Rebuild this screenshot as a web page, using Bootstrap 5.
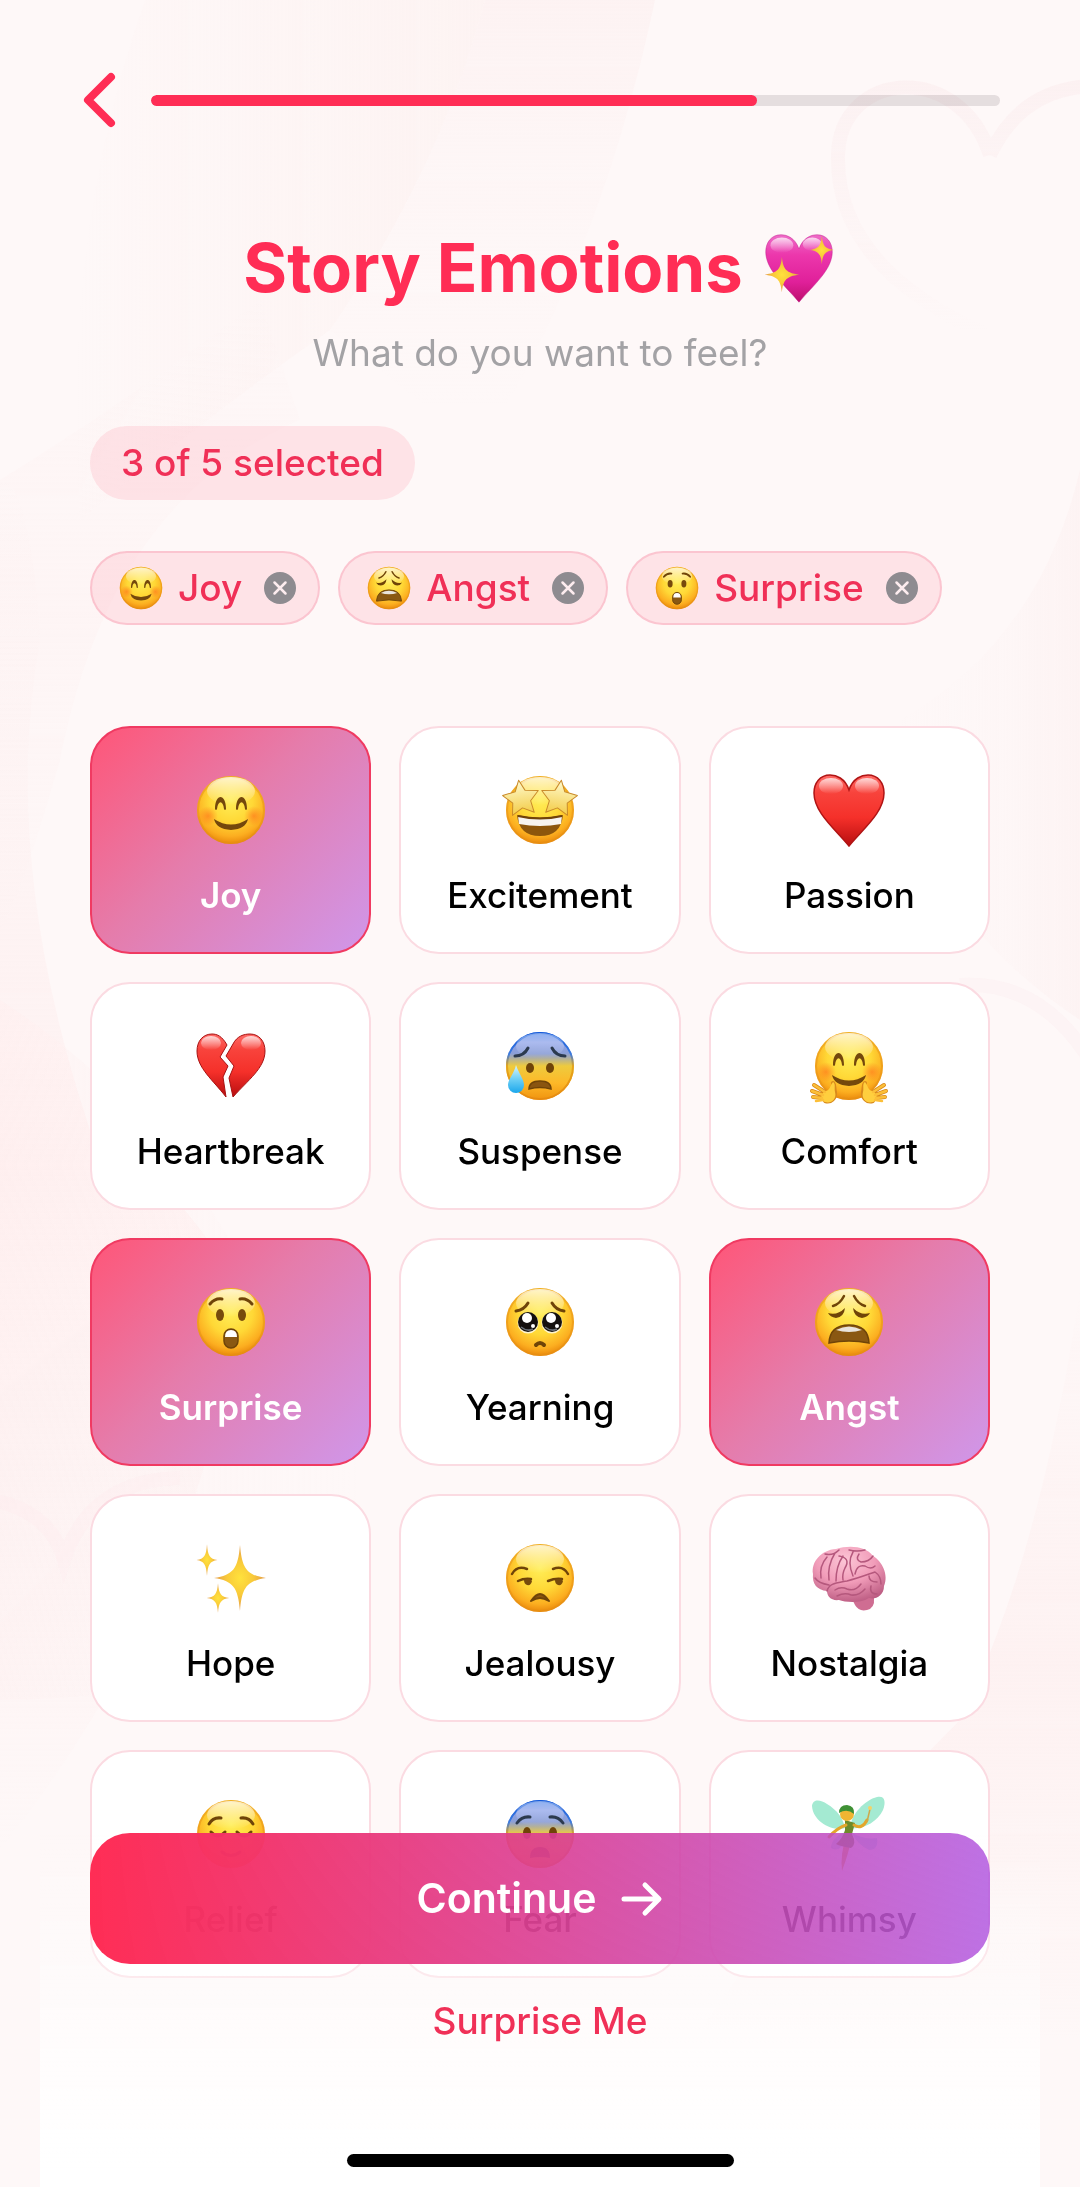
<!DOCTYPE html>
<html lang="en">
<head>
<meta charset="utf-8">
<meta name="viewport" content="width=device-width, initial-scale=1">
<title>Story Emotions</title>
<link href="https://cdn.jsdelivr.net/npm/bootstrap@5.3.0/dist/css/bootstrap.min.css" rel="stylesheet">
<style>
  :root { --pink: #ff2d55; --rose: #f03057; }
  body { font-family: Inter, "Noto Sans", sans-serif; background: #fef8f8; color: #000; min-height: 100vh; }
  .backdrop { z-index: -1; }
  .defs-sheet { width: 0; height: 0; }
  .top-bar { padding: 70px 80px 0; gap: 31px; }
  .back-btn svg { display: block; width: 40px; height: 60px; }
  .step-progress { height: 11px; border-radius: 6px; background: rgba(60,50,55,.13); --bs-progress-bar-bg: var(--pink); }
  .step-progress .progress-bar { border-radius: 6px; }
  .page-title { margin-top: 96px; gap: 18px; font-size: 67px; line-height: 84px; font-weight: 700; color: var(--pink); }
  .page-title svg { width: 76px; height: 76px; }
  .page-sub { margin-top: 18px; font-size: 37px; line-height: 50px; color: #a3a2a5; }
  .content-pad { padding: 0 90px; }
  .count-pill { margin-top: 48px; padding: 12px 31px; border-radius: 37px; font-size: 37px; line-height: 50px; font-weight: 500; color: var(--rose); background: rgba(255,45,85,.1); }
  .chip-row { margin-top: 51px; gap: 18px; }
  .chip { padding: 10px 22px 10px 24px; border: 2px solid rgba(240,70,110,.2); border-radius: 37px; background: rgba(255,45,85,.1); font-size: 37px; line-height: 50px; font-weight: 500; color: var(--rose); }
  .chip .face { width: 50px; height: 50px; margin-right: 12px; }
  .chip .chip-x { width: 32px; height: 32px; margin-left: 22px; }
  .chip-x svg { display: block; width: 32px; height: 32px; }
  .mood-grid { display: grid; grid-template-columns: repeat(3, 1fr); gap: 28px; margin-top: 101px; padding-bottom: 208px; }
  .mood { --bs-btn-hover-bg: #fff; --bs-btn-padding-x: 8px; display: flex; flex-direction: column; align-items: center; padding: 42px 8px 36px; border: 2px solid #fbdbe2; border-radius: 40px; background: #fff; font-size: 35px; line-height: 42px; font-weight: 500; color: #000; }
  .mood svg { width: 80px; height: 80px; margin-bottom: 24px; }
  .mood.active { border-color: #f03a62; font-weight: 600; color: #fff; background: linear-gradient(135deg, #ff5577, #e57cab 45%, #cf97eb) border-box; }
  .action-bar { margin: 0 40px; padding: 0 50px 20px; background: linear-gradient(rgba(255,255,255,0), rgba(255,255,255,.45) 45%, #fff 95%); }
  .go-btn { padding: 38px 20px; gap: 24px; border: 0; border-radius: 40px; font-size: 41px; line-height: 55px; font-weight: 600; color: #fff; background: linear-gradient(90deg, #ff2d55, rgba(175,82,222,.82)); }
  .go-btn svg { width: 43px; height: 36px; }
  .random-btn { margin-top: 32px; padding: 0; font-size: 37px; line-height: 50px; font-weight: 500; color: var(--rose); }
  .home-line { width: 387px; height: 13px; margin-top: 108px; border-radius: 7px; background: #000; }
</style>
<script src="https://cdn.jsdelivr.net/npm/bootstrap@5.3.0/dist/js/bootstrap.bundle.min.js"></script>
</head>
<body>

<svg class="backdrop position-fixed top-0 start-0 w-100 h-100" viewBox="0 0 1080 2187" preserveAspectRatio="none" aria-hidden="true">
  <defs>
    <linearGradient id="washA" x1="0" y1="0" x2="0" y2="1"><stop offset="0" stop-color="#fdecec"/><stop offset=".9" stop-color="#fef8f8" stop-opacity="0"/></linearGradient>
    <linearGradient id="washP" x1="0" y1="0" x2="1" y2="0"><stop offset="0" stop-color="#fdeeec" stop-opacity="0"/><stop offset="1" stop-color="#fdeeec"/></linearGradient>
    <linearGradient id="washL" x1="0" y1="0" x2="1" y2="0"><stop offset="0" stop-color="#feeaea"/><stop offset="1" stop-color="#fef8f8" stop-opacity="0"/></linearGradient>
    <linearGradient id="washR" x1="1" y1="0" x2="0" y2="0"><stop offset="0" stop-color="#fdeeee"/><stop offset="1" stop-color="#fef8f8" stop-opacity="0"/></linearGradient>
    <linearGradient id="washD" x1="0" y1="0" x2="0" y2="1"><stop offset="0" stop-color="#feeaea" stop-opacity="0"/><stop offset=".5" stop-color="#feeaea"/><stop offset="1" stop-color="#feeaea" stop-opacity="0"/></linearGradient>
    <linearGradient id="heartFade" gradientUnits="userSpaceOnUse" x1="0" y1="80" x2="0" y2="330"><stop offset="0" stop-color="#fae6e8"/><stop offset="1" stop-color="#fae6e8" stop-opacity="0"/></linearGradient>
  </defs>
  <path fill="url(#washP)" opacity=".45" d="M145 0H485Q440 170 330 330Q230 400 80 520Q60 240 145 0Z"/>
  <path fill="url(#washA)" opacity=".45" d="M485 0H655Q600 260 480 450L330 330Q440 170 485 0Z"/>
  <path fill="url(#washD)" opacity=".2" d="M0 480Q130 400 260 300L300 420Q110 500 60 760Q20 900 0 930Z"/>
  <path fill="url(#washD)" opacity=".5" d="M0 480Q30 480 40 640Q0 860 90 1130Q200 1200 240 1300Q200 1600 0 1850Z"/>
  <path fill="url(#washL)" opacity=".25" d="M0 1000Q140 1090 230 1240Q420 1380 330 1640Q160 1700 0 1700Z"/>
  <path fill="url(#washR)" opacity=".45" d="M1080 470Q1040 640 900 720Q900 900 1080 1020Z"/>
  <path fill="url(#washD)" opacity=".45" d="M1080 1290Q1040 1560 960 1720Q820 1860 700 2030L1080 2040Z"/>
  <g fill="none" stroke-width="14">
    <path stroke="url(#heartFade)" opacity=".35" d="M990 155C960 60 840 70 838 155C836 240 900 300 1010 345M990 155Q1020 90 1090 86"/>
    <g stroke="#fbe9ea" opacity=".25"><path d="M960 985Q1040 980 1090 1060"/>
    <path d="M-10 1500Q50 1510 64 1560Q90 1480 180 1478"/></g>
  </g>
</svg>

<svg class="defs-sheet position-absolute" aria-hidden="true">
  <defs>
    <radialGradient id="gFace" cx=".5" cy=".36" r=".64"><stop offset="0" stop-color="#ffee58"/><stop offset=".5" stop-color="#ffd836"/><stop offset=".82" stop-color="#fcae20"/><stop offset="1" stop-color="#ea880c"/></radialGradient>
    <linearGradient id="gShine" x1="0" y1="0" x2="0" y2="1"><stop offset="0" stop-color="#fff" stop-opacity=".75"/><stop offset="1" stop-color="#fff" stop-opacity="0"/></linearGradient>
    <linearGradient id="gBlue" x1="0" y1="0" x2="0" y2="1"><stop offset="0" stop-color="#2f6fe6"/><stop offset=".15" stop-color="#8a9fe8"/><stop offset=".32" stop-color="#8c9fd6"/><stop offset=".5" stop-color="#eecb3e"/><stop offset=".75" stop-color="#fdb828"/><stop offset="1" stop-color="#f0930f"/></linearGradient>
    <linearGradient id="gBlueRim" x1="0" y1="0" x2="0" y2="1"><stop offset="0" stop-color="#1258d8"/><stop offset=".32" stop-color="#3c7be0"/><stop offset=".5" stop-color="#e5a51c"/><stop offset="1" stop-color="#e78a10"/></linearGradient>
    <radialGradient id="gBlush"><stop offset="0" stop-color="#ff7a1c" stop-opacity=".7"/><stop offset="1" stop-color="#ff7a1c" stop-opacity="0"/></radialGradient>
    <linearGradient id="gRed" x1="0" y1="0" x2="0" y2="1"><stop offset="0" stop-color="#ff6a66"/><stop offset=".25" stop-color="#f8433c"/><stop offset=".6" stop-color="#f5302a"/><stop offset="1" stop-color="#b80e10"/></linearGradient>
    <linearGradient id="gMagenta" x1="0" y1="0" x2="0" y2="1"><stop offset="0" stop-color="#ee6cc8"/><stop offset=".3" stop-color="#ec37ac"/><stop offset=".7" stop-color="#e0209a"/><stop offset="1" stop-color="#bd0f6c"/></linearGradient>
    <radialGradient id="gStar"><stop offset="0" stop-color="#ffe23c"/><stop offset=".5" stop-color="#f9ca3a"/><stop offset="1" stop-color="#e39a4a"/></radialGradient>
    <linearGradient id="gEyeStar" x1="0" y1="0" x2="0" y2="1"><stop offset="0" stop-color="#fffbd0"/><stop offset="1" stop-color="#f3cc48"/></linearGradient>
    <linearGradient id="gDrop" x1="0" y1="0" x2="0" y2="1"><stop offset="0" stop-color="#d9f5fd"/><stop offset=".5" stop-color="#6fd0f5"/><stop offset="1" stop-color="#1ba7ec"/></linearGradient>
    <radialGradient id="gBrain" cx=".45" cy=".25" r=".8"><stop offset="0" stop-color="#fcc6d6"/><stop offset=".5" stop-color="#f19cb9"/><stop offset="1" stop-color="#b9587f"/></radialGradient>
    <path id="heartShape" d="M40 20C36 8 27 5 21 5C11 5 5 13 5 23C5 42 25 58 40 76C55 58 75 42 75 23C75 13 69 5 59 5C53 5 44 8 40 20Z"/>
    <path id="spark" d="M0 -33C2 -9 7 -3 26 0C7 3 2 9 0 33C-2 9 -7 3 -26 0C-7 -3 -2 -9 0 -33Z"/>
    <path id="eyeStar" d="M0 -17L5 -6L18 -4L9 5L11 17L0 11L-11 17L-9 5L-18 -4L-5 -6Z"/>
    <g id="base"><circle cx="40" cy="40" r="34" fill="url(#gFace)"/><circle cx="40" cy="40" r="33" fill="none" stroke="#e38f14" stroke-opacity=".5" stroke-width="2"/><ellipse cx="40" cy="21" rx="24" ry="14" fill="url(#gShine)"/></g>
    <g id="baseBlue"><circle cx="40" cy="40" r="34" fill="url(#gBlue)"/><circle cx="40" cy="40" r="33" fill="none" stroke="url(#gBlueRim)" stroke-width="2"/><ellipse cx="40" cy="20" rx="24" ry="13" fill="url(#gShine)" opacity=".6"/></g>
    <g id="happy"><circle cx="17" cy="46" r="10" fill="url(#gBlush)"/><circle cx="63" cy="46" r="10" fill="url(#gBlush)"/><g fill="#74480c"><path d="M24 39C24 23 35 23 35 39Q34 41 33 39C32 30 27 30 26 39Q25 41 24 39Z"/><path d="M45 39C45 23 56 23 56 39Q55 41 54 39C53 30 48 30 47 39Q46 41 45 39Z"/><path d="M23 49Q40 60 57 49Q55 59 40 60Q25 59 23 49Z"/></g></g>
  </defs>

  <symbol id="e-joy" viewBox="0 0 80 80"><use href="#base"/><use href="#happy"/></symbol>

  <symbol id="e-star" viewBox="0 0 80 80"><use href="#base"/>
    <path d="M17 45Q40 50 63 45Q61 66 40 66Q19 66 17 45Z" fill="#8d560c"/><path d="M18 46Q40 51 62 46L61 54Q40 58 19 54Z" fill="#f7f4f0"/><path d="M18 46Q40 51 62 46" fill="none" stroke="#70420a" stroke-width="2"/>
    <g fill="url(#gEyeStar)" stroke="#c98a2a" stroke-width="1" stroke-linejoin="round"><use href="#eyeStar" transform="translate(21 27) rotate(-8)"/><use href="#eyeStar" transform="translate(59 27) rotate(8)"/></g></symbol>

  <symbol id="e-heart" viewBox="0 0 80 80"><use href="#heartShape" fill="url(#gRed)" stroke="#b01414" stroke-width="1.500"/><ellipse cx="22" cy="16" rx="12" ry="8" fill="url(#gShine)"/><ellipse cx="58" cy="16" rx="12" ry="8" fill="url(#gShine)"/></symbol>

  <symbol id="e-broken" viewBox="0 0 80 80"><g stroke="#a81212" stroke-width="1" fill="url(#gRed)"><path d="M36 19C31 10 26 8 21 8C12 8 6 15 6 25C6 42 22 54 35 71L32 51L37 40L29 31Z"/><path d="M42 18C46 10 53 8 59 8C68 8 74 15 74 25C74 42 57 54 42 71L38 52L43 40L35 30Z"/></g><ellipse cx="20" cy="17" rx="10" ry="7" fill="url(#gShine)"/><ellipse cx="60" cy="17" rx="10" ry="7" fill="url(#gShine)"/></symbol>

  <symbol id="e-suspense" viewBox="0 0 80 80"><use href="#baseBlue"/>
    <g fill="none" stroke="#2c3a4e" stroke-width="3" stroke-linecap="round"><path d="M15 30Q24 30 28 22"/><path d="M65 30Q56 30 52 22"/></g>
    <ellipse cx="30" cy="42" rx="4" ry="5" fill="#6f4408"/><ellipse cx="50" cy="42" rx="4" ry="5" fill="#6f4408"/>
    <path d="M29 63Q29 55 40 55Q51 55 51 63Q40 60 29 63Z" fill="#8a5510" stroke="#6f4408" stroke-width="1.500"/>
    <path d="M16 39C19 48 24 53 24 59A8 8 0 0 1 8 59C8 53 14 48 16 39Z" fill="url(#gDrop)"/></symbol>

  <symbol id="e-hug" viewBox="0 0 80 80"><use href="#base"/><use href="#happy"/>
    <g id="palm"><path d="M24 57C26 59 25 62 26 66C27 72 22 77 16 75M16 66L5 59M14 69L3 65M13 72L4 71" fill="none" stroke="#d98a1c" stroke-width="4" stroke-linecap="round"/><path d="M24 56C27 58 25 62 26 66C28 73 22 78 16 76C10 75 12 66 17 65C21 64 21 60 24 56Z" fill="#ffcf3e"/><path d="M16 66L5 59M14 69L3 65M13 72L4 71M14 74L7 75" stroke="#fcbf38" stroke-width="2.500" stroke-linecap="round"/></g>
    <use href="#palm" transform="translate(80 0) scale(-1 1)"/></symbol>

  <symbol id="e-surprise" viewBox="0 0 80 80"><use href="#base"/>
    <g fill="none" stroke="#6f4408" stroke-width="3" stroke-linecap="round"><path d="M19 22Q24 16 31 17"/><path d="M61 22Q56 16 49 17"/></g>
    <ellipse cx="29" cy="33" rx="4" ry="6" fill="#774a0c"/><ellipse cx="51" cy="33" rx="4" ry="6" fill="#774a0c"/>
    <rect x="33" y="47" width="14" height="19" rx="7" fill="#8a5812" stroke="#6f4408" stroke-width="1.500"/><path d="M34 55Q34 48 40 48Q46 48 46 55Z" fill="#fff"/></symbol>

  <symbol id="e-plead" viewBox="0 0 80 80"><use href="#base"/>
    <g fill="none" stroke="#6f4408" stroke-width="3" stroke-linecap="round"><path d="M16 29Q24 28 28 21"/><path d="M64 29Q56 28 52 21"/><path d="M36 63Q40 59 44 63" stroke-width="4"/></g>
    <g id="wetEye"><circle cx="28" cy="41" r="10.500" fill="#fff" fill-opacity=".75"/><circle cx="28" cy="40" r="10" fill="#14100e"/><circle cx="27" cy="36" r="5" fill="#fff"/><circle cx="33" cy="44" r="2" fill="#fff"/><path d="M21 45Q27 50 33 47" stroke="#6a7078" stroke-width="1.500" fill="none"/></g>
    <use href="#wetEye" transform="translate(24 0)"/></symbol>

  <symbol id="e-angst" viewBox="0 0 80 80"><use href="#base"/>
    <g fill="none" stroke="#6f4408" stroke-width="2.500" stroke-linecap="round"><path d="M24 24Q31 22 35 14"/><path d="M56 24Q49 22 45 14"/></g>
    <g fill="#6f4408"><path d="M19 31Q28 34 36 26Q35 35 27 36Q21 35 19 31Z"/><path d="M61 31Q52 34 44 26Q45 35 53 36Q59 35 61 31Z"/></g>
    <path d="M20 61Q21 43 40 43Q59 43 60 61Q40 57 20 61Z" fill="#8a5812" stroke="#6f4408" stroke-width="1.500"/><path d="M27 48Q40 41 53 48Q47 50 40 50Q33 50 27 48Z" fill="#e9e4dc"/></symbol>

  <symbol id="e-sparkles" viewBox="0 0 80 80"><g fill="url(#gStar)"><use href="#spark" transform="translate(49 40)"/><use href="#spark" transform="translate(16 22) scale(.4 .480)"/><use href="#spark" transform="translate(27 60) scale(.43 .450)"/></g></symbol>

  <symbol id="e-unamused" viewBox="0 0 80 80"><use href="#base"/>
    <g fill="none" stroke="#6f4408" stroke-width="2.500" stroke-linecap="round"><path d="M12 36Q17 27 27 31"/><path d="M68 36Q63 27 53 31"/><path d="M18 43Q24 40 31 41"/><path d="M48 43Q55 40 62 41"/></g>
    <path d="M24 42Q30 39 32 43Q31 48 27 47Q24 46 24 42Z" fill="#774a0c"/><path d="M55 42Q61 39 63 43Q62 48 58 47Q55 46 55 42Z" fill="#774a0c"/>
    <path d="M31 63Q36 56 40 56Q44 56 49 63Q44 60 40 60Q36 60 31 63Z" fill="#8a5510" stroke="#6f4408" stroke-width="2" stroke-linejoin="round"/></symbol>

  <symbol id="e-brain" viewBox="0 0 80 80">
    <path d="M42 59L46 67Q50 74 58 72Q66 70 65 60Z" fill="#cf6d92"/>
    <path d="M4 36C2 24 12 12 27 11C40 7 57 8 64 18C73 23 80 37 75 48C75 58 66 62 60 60C50 66 36 64 30 62C22 63 18 58 18 53C8 52 3 46 4 36Z" fill="url(#gBrain)"/>
    <path d="M18 53C20 45 28 45 38 43C50 40 60 36 66 34M20 47C14 46 8 43 6 40M12 40Q10 28 18 19M20 42Q18 28 26 15M27 43Q27 28 34 18M30 18Q42 20 36 30Q33 36 34 42M44 14Q38 24 44 38M50 16Q46 22 52 24Q60 24 64 18M46 36Q48 26 56 28Q62 32 66 28M60 38Q60 44 68 44M66 34Q72 38 72 46M26 52Q32 48 38 51Q46 54 52 46M28 58Q36 54 42 57Q50 58 56 51M62 48Q60 56 68 56M16 16Q24 18 30 12M40 12Q48 14 56 12" fill="none" stroke="#b5587d" stroke-width="1.500" stroke-linecap="round"/></symbol>

  <symbol id="e-relief" viewBox="0 0 80 80"><use href="#base"/>
    <g fill="none" stroke="#6f4408" stroke-width="3" stroke-linecap="round"><path d="M18 30Q22 23 30 24"/><path d="M62 30Q58 23 50 24"/><path d="M20 38Q27 46 34 38"/><path d="M46 38Q53 46 60 38"/><path d="M31 58Q40 65 49 58"/></g></symbol>

  <symbol id="e-fear" viewBox="0 0 80 80"><use href="#baseBlue"/>
    <g fill="none" stroke="#2c3a4e" stroke-width="3" stroke-linecap="round"><path d="M17 29Q22 22 30 23"/><path d="M63 29Q58 22 50 23"/></g>
    <ellipse cx="27" cy="39" rx="4" ry="6" fill="#6f4408"/><ellipse cx="53" cy="39" rx="4" ry="6" fill="#6f4408"/>
    <path d="M30 64Q30 53 40 53Q50 53 50 64Q40 62 30 64Z" fill="#8a5510"/></symbol>

  <symbol id="e-fairy" viewBox="0 0 80 80">
    <g fill="#a4ead2"><path d="M36 34C24 38 4 28 3 12C4 4 12 6 18 10C28 16 34 24 36 34Z"/><path d="M41 34C42 20 56 6 68 3C76 1 77 8 74 16C68 28 54 36 41 34Z"/></g>
    <g fill="#b9e6ee"><path d="M36 38Q22 44 22 54Q32 60 38 42Z"/><path d="M42 38Q54 46 68 44Q70 56 60 56Q48 50 42 38Z"/></g>
    <path d="M37 44L42 46Q40 58 33 77Q31 60 37 44Z" fill="#e0a53c"/>
    <path d="M36 26L46 29L43 40Q48 50 42 54Q30 52 27 50Q34 44 36 36Z" fill="#6d8b2a"/>
    <path d="M37 31Q28 34 20 43M45 31Q53 36 58 26" fill="none" stroke="#e3a62c" stroke-width="3" stroke-linecap="round"/>
    <path d="M61 15L58 28" stroke="#cfa94a" stroke-width="1.500"/><circle cx="61" cy="14" r="2" fill="#f4d268"/>
    <circle cx="38" cy="20" r="7" fill="#f0b533"/><path d="M30 19Q30 11 38 11Q46 12 45 20Q38 14 30 19Z" fill="#3f9135"/></symbol>

  <symbol id="e-sparkheart" viewBox="0 0 80 80"><use href="#heartShape" fill="url(#gMagenta)" stroke="#c01888" stroke-opacity=".5" stroke-width="1"/><ellipse cx="22" cy="16" rx="12" ry="8" fill="url(#gShine)"/><ellipse cx="54" cy="15" rx="10" ry="7" fill="url(#gShine)"/>
    <g fill="url(#gStar)"><use href="#spark" transform="translate(22 47) scale(.7 .560)"/><use href="#spark" transform="translate(64 21) scale(.48 .460)"/></g></symbol>

  <symbol id="i-close" viewBox="0 0 32 32"><circle cx="16" cy="16" r="16" fill="#8e8b90"/><path d="M10.500 10.500L21.500 21.500M21.500 10.500L10.500 21.500" stroke="#fdecef" stroke-width="2.500" stroke-linecap="round"/></symbol>
</svg>

<header class="top-bar d-flex align-items-center">
  <button type="button" class="back-btn btn border-0 p-0" aria-label="Back"><svg viewBox="0 0 40 60" fill="none" stroke="#ff2d55" stroke-width="8" stroke-linecap="round" stroke-linejoin="round"><path d="M31 7L8 30L31 53"/></svg></button>
  <div class="step-progress progress flex-grow-1" role="progressbar" aria-label="Progress" aria-valuenow="5" aria-valuemin="0" aria-valuemax="7"><div class="progress-bar" style="width: 71.4%"></div></div>
</header>

<main class="content-pad">
  <h1 class="page-title d-flex justify-content-center align-items-center mb-0">Story Emotions <svg aria-hidden="true"><use href="#e-sparkheart"/></svg></h1>
  <p class="page-sub text-center mb-0">What do you want to feel?</p>

  <div class="d-flex"><span class="count-pill">3 of 5 selected</span></div>

  <div class="chip-row d-flex flex-wrap">
    <div class="chip d-flex align-items-center"><svg class="face" aria-hidden="true"><use href="#e-joy"/></svg>Joy<button type="button" class="chip-x btn border-0 p-0" aria-label="Remove Joy"><svg><use href="#i-close"/></svg></button></div>
    <div class="chip d-flex align-items-center"><svg class="face" aria-hidden="true"><use href="#e-angst"/></svg>Angst<button type="button" class="chip-x btn border-0 p-0" aria-label="Remove Angst"><svg><use href="#i-close"/></svg></button></div>
    <div class="chip d-flex align-items-center"><svg class="face" aria-hidden="true"><use href="#e-surprise"/></svg>Surprise<button type="button" class="chip-x btn border-0 p-0" aria-label="Remove Surprise"><svg><use href="#i-close"/></svg></button></div>
  </div>

  <div class="mood-grid">
    <button type="button" class="mood btn active" aria-pressed="true"><svg><use href="#e-joy"/></svg>Joy</button>
    <button type="button" class="mood btn"><svg><use href="#e-star"/></svg>Excitement</button>
    <button type="button" class="mood btn"><svg><use href="#e-heart"/></svg>Passion</button>
    <button type="button" class="mood btn"><svg><use href="#e-broken"/></svg>Heartbreak</button>
    <button type="button" class="mood btn"><svg><use href="#e-suspense"/></svg>Suspense</button>
    <button type="button" class="mood btn"><svg><use href="#e-hug"/></svg>Comfort</button>
    <button type="button" class="mood btn active" aria-pressed="true"><svg><use href="#e-surprise"/></svg>Surprise</button>
    <button type="button" class="mood btn"><svg><use href="#e-plead"/></svg>Yearning</button>
    <button type="button" class="mood btn active" aria-pressed="true"><svg><use href="#e-angst"/></svg>Angst</button>
    <button type="button" class="mood btn"><svg><use href="#e-sparkles"/></svg>Hope</button>
    <button type="button" class="mood btn"><svg><use href="#e-unamused"/></svg>Jealousy</button>
    <button type="button" class="mood btn"><svg><use href="#e-brain"/></svg>Nostalgia</button>
    <button type="button" class="mood btn"><svg><use href="#e-relief"/></svg>Relief</button>
    <button type="button" class="mood btn"><svg><use href="#e-fear"/></svg>Fear</button>
    <button type="button" class="mood btn"><svg><use href="#e-fairy"/></svg>Whimsy</button>
  </div>
</main>

<footer class="action-bar fixed-bottom d-flex flex-column align-items-center">
  <button type="button" class="go-btn btn w-100 d-flex justify-content-center align-items-center">Continue <svg viewBox="0 0 43 36" fill="none" stroke="#fff" stroke-width="5" stroke-linecap="round" stroke-linejoin="round" aria-hidden="true"><path d="M4 18H38M25 4L39 18L25 32"/></svg></button>
  <button type="button" class="random-btn btn border-0">Surprise Me</button>
  <div class="home-line"></div>
</footer>

</body>
</html>
